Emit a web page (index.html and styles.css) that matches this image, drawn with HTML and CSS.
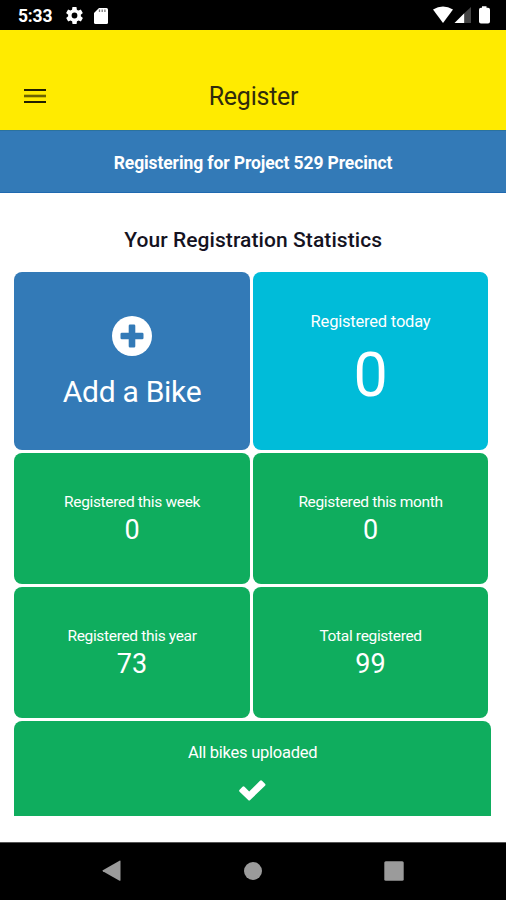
FILE: index.html
```html
<!DOCTYPE html>
<html lang="en">
<head>
<meta charset="utf-8">
<title>Register</title>
<link rel="stylesheet" href="styles.css">
</head>
<body>
<div class="status">
  <span class="clock">5:33</span>
  <svg class="gear" width="17" height="17" viewBox="2 2 20 20"><path fill="#fff" fill-rule="evenodd" d="M19.4 13c0-.3.1-.6.1-1s0-.7-.1-1l2.1-1.600c.2-.2.3-.4.1-.7l-2-3.400c-.1-.2-.4-.3-.6-.2l-2.500 1c-.5-.4-1.100-.7-1.700-1l-.4-2.600c0-.3-.2-.5-.4-.5h-4c-.3 0-.5.2-.5.400l-.4 2.700c-.6.200-1.100.6-1.700 1l-2.500-1c-.2-.1-.5 0-.6.200l-2 3.400c-.1.300-.1.500.1.700L4.600 11c0 .3-.1.600-.1 1s0 .7.100 1l-2.100 1.600c-.2.200-.3.500-.1.700l2 3.400c.1.300.4.300.6.200l2.500-1c.5.400 1.100.8 1.700 1l.4 2.700c0 .2.200.4.500.4h4c.2 0 .4-.2.400-.4l.4-2.700c.6-.2 1.200-.6 1.700-1l2.500 1c.2.100.5 0 .6-.200l2-3.400c.2-.2.100-.5-.1-.7zM12 15.400a3.400 3.400 0 1 1 0-6.800 3.400 3.400 0 0 1 0 6.800z"/></svg>
  <svg class="sd" width="14" height="16" viewBox="0 0 14 16"><path fill="#fff" d="M5 0h7.500Q14 0 14 1.500v13Q14 16 12.500 16h-11Q0 16 0 14.500V5z"/><path stroke="#777" stroke-width="1.300" d="M5.500 1.500v2.500M8.200 1.500v2.500M10.900 1.500v2.500"/></svg>
  <svg class="radio" width="58" height="18" viewBox="0 0 58 18"><path fill="#fff" d="M0 3.500Q10 -2.500 20 3.500L10 17z"/><path fill="#fff" d="M21.500 17L31.500 7v10z"/><path fill="#444" d="M31.500 7L38 1v16h-6.500z"/><path fill="#fff" d="M49 1.800V.3h4.500v1.500H55q2 0 2 2V15.500q0 2-2 2h-7q-2 0-2-2V3.800q0-2 2-2z"/></svg>
</div>
<header class="bar">
  <svg class="menu" width="22" height="16" viewBox="0 0 22 16"><path stroke="#211f00" stroke-width="2" d="M0 2h22M0 14h22"/><path stroke="#6d6500" stroke-width="2.600" d="M0 8h22"/></svg>
  <h1 class="title">Register</h1>
</header>
<div class="banner">Registering for Project 529 Precinct</div>
<main class="content">
  <h2 class="heading">Your Registration Statistics</h2>
  <div class="grid">
    <section class="card add">
      <svg class="plus" width="40" height="40" viewBox="0 0 40 40"><circle cx="20" cy="20" r="20" fill="#fff"/><path fill="#337ab7" d="M18 8.500h4q1.300 0 1.300 1.300v6.900h6.900q1.300 0 1.300 1.300v4q0 1.300-1.300 1.300h-6.900v6.900q0 1.300-1.300 1.300h-4q-1.300 0-1.300-1.300v-6.900H9.800q-1.300 0-1.300-1.300v-4q0-1.300 1.300-1.300h6.900V9.800q0-1.300 1.300-1.300z"/></svg>
      <div class="add-label">Add a Bike</div>
    </section>
    <section class="card today"><div class="label">Registered today</div><div class="value">0</div></section>
    <section class="card"><div class="label">Registered this week</div><div class="value">0</div></section>
    <section class="card"><div class="label">Registered this month</div><div class="value">0</div></section>
    <section class="card"><div class="label">Registered this year</div><div class="value">73</div></section>
    <section class="card"><div class="label">Total registered</div><div class="value">99</div></section>
  </div>
  <section class="card upload">
    <div class="label">All bikes uploaded</div>
    <svg class="check" width="27" height="21" viewBox="0 0 27 21"><path fill="#fff" d="M.6 9.700L3.500 6.800q1-1 2 0l4.700 4.700L21 .7q1-1 2 0l3 3q1 1 0 2L11.200 20q-1 1-2 0L.6 11.700q-1-1 0-2z"/></svg>
  </section>
</main>
<nav class="nav">
  <svg width="20" height="22" viewBox="0 0 20 22"><path fill="#9b9b9b" d="M.8 10.200L17.500.7q1-.5 1 .7v18.600q0 1.200-1 .7L.8 11.200q-.8-.5 0-1z"/></svg>
  <svg width="18" height="18" viewBox="0 0 18 18"><circle cx="9" cy="9" r="9" fill="#9b9b9b"/></svg>
  <svg width="20" height="20" viewBox="0 0 20 20"><rect x=".3" y=".3" width="19.400" height="19.400" rx="1.500" fill="#9b9b9b"/></svg>
</nav>
</body>
</html>
```
FILE: styles.css
```css
* { box-sizing: border-box; }
body {
  margin: 0;
  width: 506px;
  height: 900px;
  overflow: hidden;
  display: flex;
  flex-direction: column;
  background: #fff;
  font-family: Roboto, "Liberation Sans", sans-serif;
}
.status {
  height: 29.500px;
  flex: none;
  display: flex;
  align-items: center;
  padding: 2px 16px 0 18px;
  background: #000;
  color: #fff;
}
.clock { width: 48px; font-size: 17.500px; font-weight: 700; line-height: 20px; letter-spacing: -.2px; }
.sd { margin-left: 11px; }
.radio { margin-left: auto; margin-right: -1px; margin-top: -1px; }
.bar {
  height: 100px;
  flex: none;
  display: grid;
  grid-template-columns: 64px 1fr 64px;
  align-items: center;
  padding-top: 33px;
  background: #ffeb00;
}
.menu { margin-left: 24px; }
.title {
  margin: 2px 0 0;
  padding-left: 1px;
  text-align: center;
  font-size: 25px;
  font-weight: 400;
  line-height: 30px;
  letter-spacing: -.25px;
  color: #302c0c;
}
.banner {
  height: 63px;
  flex: none;
  border-top: 1px solid #2b729e;
  border-bottom: 1px solid #1f69b0;
  background: #337ab7;
  color: #fff;
  text-align: center;
  font-size: 17.500px;
  font-weight: 700;
  line-height: 64px;
  letter-spacing: -.11px;
}
.content { flex: 1; padding: 0 15px 0 14.300px; }
.heading {
  margin: 0;
  height: 79.900px;
  padding: 33px 0 0 1px;
  text-align: center;
  font-size: 21px;
  font-weight: 500;
  line-height: 28px;
  letter-spacing: .08px;
  color: #15131f;
}
.grid {
  width: 474px;
  display: grid;
  grid-template-columns: 1fr 1fr;
  grid-template-rows: 178px 131px 131px;
  gap: 3px;
}
.card {
  padding-top: 38.600px;
  border-radius: 8px;
  background: #0fad5e;
  color: #fff;
  text-align: center;
}
.label { font-size: 15.500px; line-height: 20px; letter-spacing: -.33px; }
.value { font-size: 27px; line-height: 36px; }
.add { padding-top: 43.600px; background: #337ab7; }
.plus { display: block; margin: 0 auto; }
.add-label { font-size: 30px; line-height: 36px; margin-top: 18px; letter-spacing: -.28px; }
.today { padding-top: 39.600px; background: #00bcd9; }
.today .label { font-size: 16.500px; letter-spacing: -.2px; }
.today .value { font-size: 61px; line-height: 70px; margin-top: 8px; }
.upload {
  margin-top: 3px;
  height: 95px;
  padding-top: 21.600px;
  border-radius: 8px 8px 0 0;
}
.upload .label { font-size: 16.500px; letter-spacing: -.24px; }
.check { display: block; margin: 17px auto 0; }
.nav {
  height: 58.500px;
  flex: none;
  display: flex;
  justify-content: space-between;
  align-items: center;
  padding: 0 102px 0 102px;
  border-top: 1px solid #555;
  background: #000;
}
```
